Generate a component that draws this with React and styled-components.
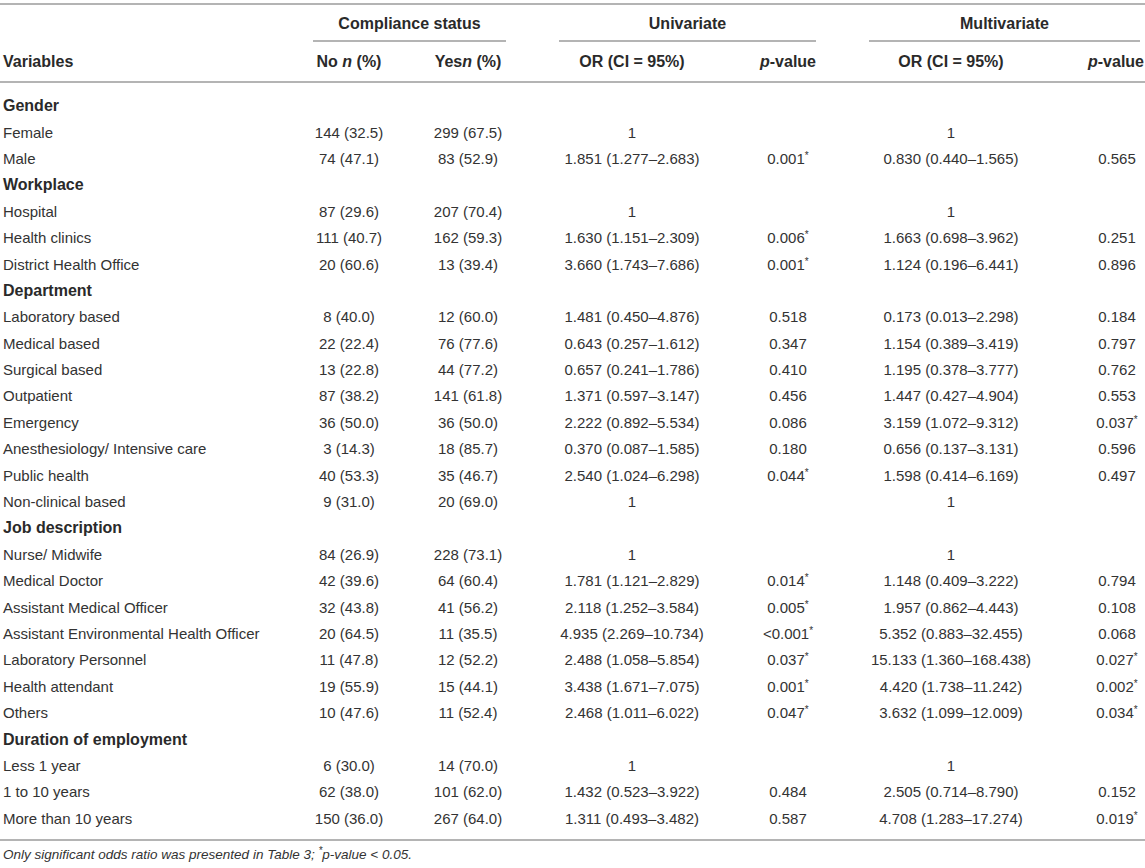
import React from "react";
import styled, { createGlobalStyle } from "styled-components";

const GlobalStyle = createGlobalStyle`
  html, body { margin: 0; padding: 0; background: #ffffff; }
  body {
    font-family: "Liberation Sans", Arial, Helvetica, sans-serif;
    color: #333333;
    -webkit-font-smoothing: antialiased;
  }
`;

const COLS = "290px 118px 120px 208px 104px 222px 83px";
const LINE = "#b4b4b4";

const Page = styled.div`
  width: 1145px;
  padding-top: 3px;
`;

const Table = styled.div`
  border-top: 2px solid ${LINE};
  border-bottom: 2px solid ${LINE};
`;

const Row = styled.div`
  display: grid;
  grid-template-columns: ${COLS};
  align-items: center;
  font-size: 15px;
  line-height: 18px;
`;

const GroupRow = styled(Row)`
  align-items: end;
`;

const GroupCell = styled.div`
  grid-column: span 2;
  margin-left: ${(p) => p.$ml}px;
  margin-right: ${(p) => p.$mr}px;
  padding: 10px 0 7px;
  border-bottom: 2px solid ${LINE};
  text-align: center;
  font-size: 16px;
  font-weight: bold;
  color: #2a2a2a;
  white-space: nowrap;
`;

const HeadRow = styled(Row)`
  border-bottom: 2px solid ${LINE};
`;

const HeadCell = styled.div`
  padding-top: 11px;
  padding-bottom: 10px;
  text-align: ${(p) => (p.$col === 0 ? "left" : "center")};
  padding-left: ${(p) => (p.$col === 0 ? 3 : p.$col === 6 ? 25 : 0)}px;
  font-size: 16px;
  font-weight: bold;
  color: #2a2a2a;
  white-space: nowrap;
`;

const Body = styled.div`
  padding: 10px 0 7px;
`;

const BodyRow = styled(Row)`
  height: 26.4px;
`;

const Cell = styled.div`
  text-align: ${(p) => (p.$col === 0 ? "left" : "center")};
  padding-left: ${(p) => (p.$col === 0 ? 3 : p.$col === 6 ? 27 : 0)}px;
  white-space: nowrap;
`;

const SectionCell = styled.div`
  grid-column: 1 / -1;
  padding-left: 3px;
  font-size: 16px;
  font-weight: bold;
  color: #2a2a2a;
`;

const Star = styled.sup`
  font-size: 10px;
  line-height: 0;
  vertical-align: 5px;
`;

const Footnote = styled.div`
  margin-top: 6px;
  padding-left: 3px;
  font-size: 13.5px;
  line-height: 16px;
  font-style: italic;
  color: #333333;
`;

const rows = [
  { section: "Gender" },
  ["Female", "144 (32.5)", "299 (67.5)", "1", "", "1", ""],
  ["Male", "74 (47.1)", "83 (52.9)", "1.851 (1.277–2.683)", "0.001*", "0.830 (0.440–1.565)", "0.565"],
  { section: "Workplace" },
  ["Hospital", "87 (29.6)", "207 (70.4)", "1", "", "1", ""],
  ["Health clinics", "111 (40.7)", "162 (59.3)", "1.630 (1.151–2.309)", "0.006*", "1.663 (0.698–3.962)", "0.251"],
  ["District Health Office", "20 (60.6)", "13 (39.4)", "3.660 (1.743–7.686)", "0.001*", "1.124 (0.196–6.441)", "0.896"],
  { section: "Department" },
  ["Laboratory based", "8 (40.0)", "12 (60.0)", "1.481 (0.450–4.876)", "0.518", "0.173 (0.013–2.298)", "0.184"],
  ["Medical based", "22 (22.4)", "76 (77.6)", "0.643 (0.257–1.612)", "0.347", "1.154 (0.389–3.419)", "0.797"],
  ["Surgical based", "13 (22.8)", "44 (77.2)", "0.657 (0.241–1.786)", "0.410", "1.195 (0.378–3.777)", "0.762"],
  ["Outpatient", "87 (38.2)", "141 (61.8)", "1.371 (0.597–3.147)", "0.456", "1.447 (0.427–4.904)", "0.553"],
  ["Emergency", "36 (50.0)", "36 (50.0)", "2.222 (0.892–5.534)", "0.086", "3.159 (1.072–9.312)", "0.037*"],
  ["Anesthesiology/ Intensive care", "3 (14.3)", "18 (85.7)", "0.370 (0.087–1.585)", "0.180", "0.656 (0.137–3.131)", "0.596"],
  ["Public health", "40 (53.3)", "35 (46.7)", "2.540 (1.024–6.298)", "0.044*", "1.598 (0.414–6.169)", "0.497"],
  ["Non-clinical based", "9 (31.0)", "20 (69.0)", "1", "", "1", ""],
  { section: "Job description" },
  ["Nurse/ Midwife", "84 (26.9)", "228 (73.1)", "1", "", "1", ""],
  ["Medical Doctor", "42 (39.6)", "64 (60.4)", "1.781 (1.121–2.829)", "0.014*", "1.148 (0.409–3.222)", "0.794"],
  ["Assistant Medical Officer", "32 (43.8)", "41 (56.2)", "2.118 (1.252–3.584)", "0.005*", "1.957 (0.862–4.443)", "0.108"],
  ["Assistant Environmental Health Officer", "20 (64.5)", "11 (35.5)", "4.935 (2.269–10.734)", "<0.001*", "5.352 (0.883–32.455)", "0.068"],
  ["Laboratory Personnel", "11 (47.8)", "12 (52.2)", "2.488 (1.058–5.854)", "0.037*", "15.133 (1.360–168.438)", "0.027*"],
  ["Health attendant", "19 (55.9)", "15 (44.1)", "3.438 (1.671–7.075)", "0.001*", "4.420 (1.738–11.242)", "0.002*"],
  ["Others", "10 (47.6)", "11 (52.4)", "2.468 (1.011–6.022)", "0.047*", "3.632 (1.099–12.009)", "0.034*"],
  { section: "Duration of employment" },
  ["Less 1 year", "6 (30.0)", "14 (70.0)", "1", "", "1", ""],
  ["1 to 10 years", "62 (38.0)", "101 (62.0)", "1.432 (0.523–3.922)", "0.484", "2.505 (0.714–8.790)", "0.152"],
  ["More than 10 years", "150 (36.0)", "267 (64.0)", "1.311 (0.493–3.482)", "0.587", "4.708 (1.283–17.274)", "0.019*"],
];

function Value({ text }) {
  if (text.endsWith("*")) {
    return (
      <>
        {text.slice(0, -1)}
        <Star>*</Star>
      </>
    );
  }
  return <>{text}</>;
}

function PValue() {
  return (
    <>
      <i>p</i>-value
    </>
  );
}

export default function App() {
  return (
    <Page>
      <GlobalStyle />
      <Table>
        <GroupRow>
          <div />
          <GroupCell $ml={23} $mr={22}>Compliance status</GroupCell>
          <GroupCell $ml={31} $mr={24}>Univariate</GroupCell>
          <GroupCell $ml={29} $mr={5}>Multivariate</GroupCell>
        </GroupRow>
        <HeadRow>
          <HeadCell $col={0}>Variables</HeadCell>
          <HeadCell $col={1}>
            No <i>n</i> (%)
          </HeadCell>
          <HeadCell $col={2}>
            Yes<i>n</i> (%)
          </HeadCell>
          <HeadCell $col={3}>OR (CI = 95%)</HeadCell>
          <HeadCell $col={4}>
            <PValue />
          </HeadCell>
          <HeadCell $col={5}>OR (CI = 95%)</HeadCell>
          <HeadCell $col={6}>
            <PValue />
          </HeadCell>
        </HeadRow>
        <Body>
          {rows.map((r, i) =>
            r.section ? (
              <BodyRow key={i}>
                <SectionCell>{r.section}</SectionCell>
              </BodyRow>
            ) : (
              <BodyRow key={i}>
                {r.map((c, j) => (
                  <Cell key={j} $col={j}>
                    <Value text={c} />
                  </Cell>
                ))}
              </BodyRow>
            )
          )}
        </Body>
      </Table>
      <Footnote>
        Only significant odds ratio was presented in Table 3; <Star>*</Star>
        p-value &lt; 0.05.
      </Footnote>
    </Page>
  );
}
